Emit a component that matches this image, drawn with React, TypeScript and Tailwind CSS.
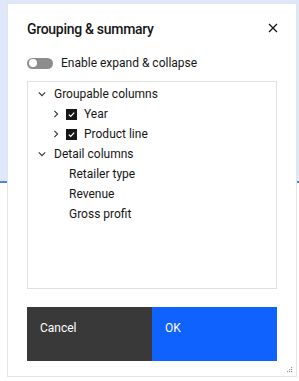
import React from "react";

type Item = { label: string; checked?: boolean };

const groupable: Item[] = [
  { label: "Year", checked: true },
  { label: "Product line", checked: true },
];

const details: Item[] = [{ label: "Retailer type" }, { label: "Revenue" }, { label: "Gross profit" }];

function ChevronDown() {
  return (
    <svg width="10" height="10" viewBox="0 0 10 10" className="text-[#333]">
      <path d="M1.8 3.4 L5 6.6 L8.2 3.4" fill="none" stroke="currentColor" strokeWidth="1.1" />
    </svg>
  );
}

function ChevronRight() {
  return (
    <svg width="10" height="10" viewBox="0 0 10 10" className="text-[#333]">
      <path d="M3.4 1.8 L6.6 5 L3.4 8.2" fill="none" stroke="currentColor" strokeWidth="1.1" />
    </svg>
  );
}

function Checkbox() {
  return (
    <span className="flex h-[11px] w-[11px] items-center justify-center bg-[#161616]">
      <svg width="9" height="9" viewBox="0 0 9 9">
        <path d="M1.8 4.6 L3.7 6.4 L7.2 2.6" fill="none" stroke="#fff" strokeWidth="1.3" />
      </svg>
    </span>
  );
}

export default function App() {
  return (
    <div
      className="relative h-[381px] w-[299px] overflow-hidden bg-white"
      style={{ fontFamily: "Roboto, 'Noto Sans', sans-serif" }}
    >
      {/* page behind the dialog */}
      <div className="h-[181px] bg-[#dfe8fb]" />
      <div className="h-[2px] bg-[#4a86e8]" />

      {/* Dialog */}
      <div className="absolute left-[7px] top-[3px] flex h-[374px] w-[290px] flex-col border border-[#e4e4e4] bg-white px-[19px] pt-[15px] pb-[15px] text-[#161616]">
        <div className="flex items-start justify-between">
          <h2 className="text-[14px] leading-[20px] font-medium tracking-[-0.3px]">Grouping &amp; summary</h2>
          <button className="mt-[-1px] mr-[-6px] flex h-[20px] w-[20px] items-center justify-center">
            <svg width="10" height="10" viewBox="0 0 10 10">
              <path d="M1 1 L9 9 M9 1 L1 9" stroke="#161616" strokeWidth="1.3" />
            </svg>
          </button>
        </div>

        {/* Toggle */}
        <div className="mt-[14px] flex h-[20px] items-center gap-[8px]">
          <span className="flex h-[11px] w-[26px] items-center rounded-full bg-[#8d8d8d] px-[2px]">
            <span className="h-[8px] w-[8px] rounded-full bg-white" />
          </span>
          <span className="text-[12px] leading-[20px]">Enable expand &amp; collapse</span>
        </div>

        {/* Tree */}
        <div className="mt-[8px] h-[208px] border border-[#e0e0e0] pt-[2px] text-[12px] leading-[20px]">
          <div className="flex h-[20px] items-center">
            <span className="ml-[9px] flex w-[10px] justify-center">
              <ChevronDown />
            </span>
            <span className="ml-[7px]">Groupable columns</span>
          </div>
          {groupable.map((g) => (
            <div key={g.label} className="flex h-[20px] items-center">
              <span className="ml-[23px] flex w-[10px] justify-center">
                <ChevronRight />
              </span>
              <span className="ml-[5px]">
                <Checkbox />
              </span>
              <span className="ml-[7px]">{g.label}</span>
            </div>
          ))}
          <div className="flex h-[20px] items-center">
            <span className="ml-[9px] flex w-[10px] justify-center">
              <ChevronDown />
            </span>
            <span className="ml-[7px]">Detail columns</span>
          </div>
          {details.map((d) => (
            <div key={d.label} className="flex h-[20px] items-center pl-[41px]">
              {d.label}
            </div>
          ))}
        </div>

        {/* Buttons */}
        <div className="mt-[18px] grid h-[54px] grid-cols-2 text-[12px] leading-[20px] text-white">
          <button className="flex items-start bg-[#393939] pl-[13px] pt-[11px] text-left">Cancel</button>
          <button className="flex items-start bg-[#0f62fe] pl-[13px] pt-[11px] text-left">OK</button>
        </div>

        {/* resize grip */}
        <svg width="6" height="6" viewBox="0 0 6 6" className="absolute right-[3px] bottom-[3px]">
          <rect x="4" y="0" width="1.2" height="1.2" fill="#9a9a9a" />
          <rect x="2" y="2" width="1.2" height="1.2" fill="#9a9a9a" />
          <rect x="4" y="2" width="1.2" height="1.2" fill="#9a9a9a" />
          <rect x="0" y="4" width="1.2" height="1.2" fill="#9a9a9a" />
          <rect x="2" y="4" width="1.2" height="1.2" fill="#9a9a9a" />
          <rect x="4" y="4" width="1.2" height="1.2" fill="#9a9a9a" />
        </svg>
      </div>
    </div>
  );
}
